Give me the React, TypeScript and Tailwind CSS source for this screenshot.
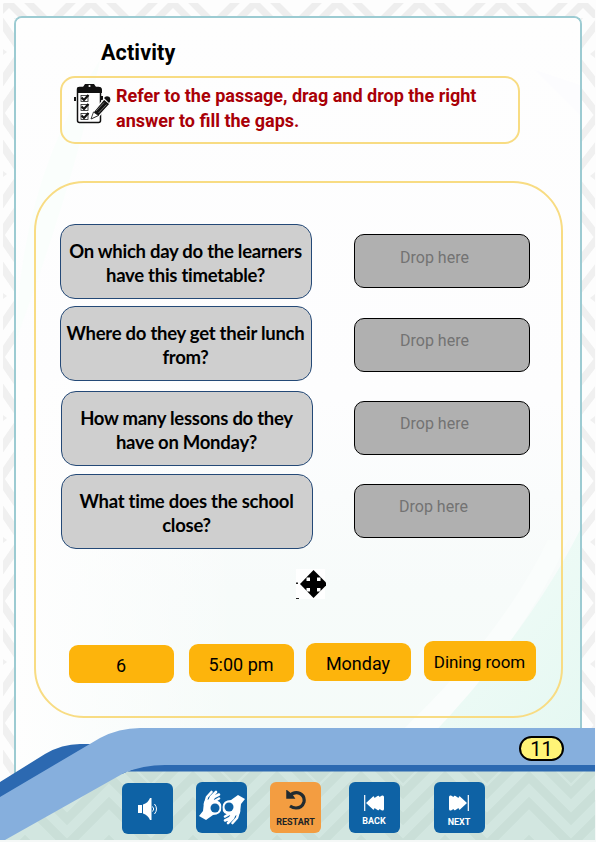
import type { ReactNode } from "react";

const questions = [
  { lines: ["On which day do the learners", "have this timetable?"], box: "mt-0" },
  { lines: ["Where do they get their lunch", "from?"], box: "mt-[7px]" },
  { lines: ["How many lessons do they", "have on Monday?"], box: "mt-[10px] ml-px" },
  { lines: ["What time does the school", "close?"], box: "mt-2 ml-px" },
];

const drops = ["pl-[45px] pt-[13px]", "pl-[45px] pt-3 mt-[30px]", "pl-[45px] pt-3 mt-[29px]", "pl-[44px] pt-3 mt-[29px]"];

function Backdrop() {
  return (
    <svg className="absolute inset-0" width="596" height="842" viewBox="0 0 596 842">
      <defs>
        <pattern id="weave" x="50" y="-4" width="82" height="61" patternUnits="userSpaceOnUse">
          <g fill="none" stroke="#eeeeee" strokeWidth="7">
            <path d="M-10 38 41 -13 92 38" />
            <path d="M-10 58 41 7 92 58" />
            <path d="M-10 78 41 27 92 78" />
          </g>
        </pattern>
        <pattern id="sideWeave" x="3" y="-9" width="12" height="122" patternUnits="userSpaceOnUse">
          <path d="M-3 0 15 26M-3 29 15 55M-3 122 15 96M-3 93 15 67" fill="none" stroke="#f0f0f0" strokeWidth="8" />
          <path d="M0 58 4 61 0 64Z" fill="#f0f0f0" />
        </pattern>
        <pattern id="rightWeave" x="581" y="-7" width="14" height="122" patternUnits="userSpaceOnUse">
          <path d="M17 0 -3 26M17 29 -3 55M17 122 -3 96M17 93 -3 67" fill="none" stroke="#f0f0f0" strokeWidth="7" />
          <path d="M14 57 9 61 14 65Z" fill="#f0f0f0" />
        </pattern>
      </defs>
      <path d="M0 0H596V842H0Z" fill="#fdfdfd" />
      <path d="M3 3H595V18H3Z" fill="url(#weave)" />
      <path d="M3 18H15V800H3Z" fill="url(#sideWeave)" />
      <path d="M581 18H595V740H581Z" fill="url(#rightWeave)" />
    </svg>
  );
}

function PanelTint() {
  return (
    <svg className="absolute inset-0" width="564" height="764" viewBox="16 18 564 764">
      <defs>
        <linearGradient id="wash" x1="0" y1="0" x2="0" y2="1">
          <stop offset="0" stopColor="#fefefe" />
          <stop offset=".5" stopColor="#fdfdfe" />
          <stop offset=".75" stopColor="#f7fbfa" />
          <stop offset="1" stopColor="#f4fbf8" />
        </linearGradient>
        <linearGradient id="mint" x1="1" y1="1" x2=".2" y2="0">
          <stop offset="0" stopColor="#e5f8f2" />
          <stop offset="1" stopColor="#f2fcf8" />
        </linearGradient>
        <linearGradient id="edgeFade" x1="0" y1="0" x2="1" y2="0">
          <stop offset="0" stopColor="#fefefe" />
          <stop offset="1" stopColor="#fefefe" stopOpacity="0" />
        </linearGradient>
      </defs>
      <path d="M16 18H580V782H16Z" fill="url(#wash)" />
      <path d="M16 380H240V782H16Z" fill="url(#edgeFade)" />
      <path d="M16 340Q20 180 100 60Q75 180 16 340Z" fill="#fafefc" />
      <path d="M580 530Q530 630 425 742H580Z" fill="url(#mint)" />
      <path d="M548 540Q500 640 390 742H425Q525 640 568 540Z" fill="#fafdfc" />
      <path d="M535 70 580 85V115Z" fill="#fcfcfe" />
    </svg>
  );
}

function ChecklistIcon() {
  return (
    <svg className="mt-[5px] shrink-0" width="37" height="42" viewBox="0 0 37 42">
      <rect x="3.500" y="4.500" width="23" height="35" rx="2" fill="#fff" stroke="#111" strokeWidth="1.500" />
      <path d="M3 10V6Q3 4 5 4H9L11 1H20L22 4H25Q28 4 28 7V10Z" fill="#111" />
      <circle cx="15.500" cy="3" r="1.100" fill="#fff" />
      <path d="M1 14V18M28 13V17" stroke="#111" strokeWidth="2" />
      <g fill="#fff" stroke="#222" strokeWidth=".8">
        <rect x="7" y="12.500" width="7" height="6" />
        <rect x="7" y="21.500" width="7" height="6" />
        <rect x="7" y="30.500" width="7" height="6" />
      </g>
      <path d="M7.500 14.500 10 17 14.500 12M7.500 23.500 10 26 14.500 21M7.500 32.500 10 35 14.500 30" fill="none" stroke="#111" strokeWidth="2.200" />
      <path d="M17 37 20 28 30 16 36 21 25 33Z" fill="#111" stroke="#fff" strokeWidth="1.200" />
      <path d="M17 36 19.500 29 24.500 32.500Z" fill="#fff" stroke="#111" strokeWidth=".8" />
      <path d="M22 28 30 19.500M24.500 30 32.500 21.500" stroke="#999" strokeWidth=".7" />
      <path d="M30 15Q32 12 35.500 14Q37.500 17 35 20Z" fill="#111" />
    </svg>
  );
}

function MoveCursor() {
  return (
    <svg className="mt-5 ml-[260px]" width="30" height="30" viewBox="0 0 30 30">
      <path d="M0 0H29V30H0Z" fill="#fff" />
      <path d="M17.500 1 30 13.500V16.500L17.500 29 4 15Z" fill="#000" />
      <path d="M10.500 8.500H14V12H10.500ZM21 8.500H24.500V12H21ZM10.500 19H14V22.500H10.500ZM21 19H24.500V22.500H21Z" fill="#fff" />
      <path d="M0 13.500H2V15H0ZM0 29H3V30H0Z" fill="#222" />
    </svg>
  );
}

function FooterArt() {
  return (
    <svg className="absolute inset-0" width="596" height="116" viewBox="0 726 596 116">
      <defs>
        <pattern id="floor" x="25" y="756" width="84" height="90" patternUnits="userSpaceOnUse">
          <g fill="none" stroke="#cadfd8" strokeWidth="9">
            <path d="M-5 -10 42 37 89 -10M-5 16 42 63 89 16M-5 42 42 89 89 42M-5 80 42 127 89 80" />
            <path d="M42 -1 53 10 42 21 31 10Z" fill="#cadfd8" />
          </g>
        </pattern>
      </defs>
      <path d="M0 842V800H596V842Z" fill="#f5f8f7" />
      <path d="M0 840 100 765H595V840Z" fill="#d2e6e0" />
      <path d="M0 840 100 765H595V840Z" fill="url(#floor)" />
      <path d="M0 782 45 754Q62 744 80 744H110L0 814ZM122 774Q140 765 155 764H595V771.500H122Z" fill="#2c69b1" />
      <path d="M0 797 100 738Q119 728 140 728H595V765H165Q143 765 124 773L5 840H0Z" fill="#86afdd" />
    </svg>
  );
}

function SpeakerIcon() {
  return (
    <svg width="22" height="24" viewBox="0 0 22 24">
      <path d="M1 8H5V16H1ZM6 7.500Q11 6 13 1H14.500V23H13Q11 18 6 16.500Z" fill="#fff" />
      <path d="M15.500 9.500Q18 12 15.500 14.500M17.500 7Q21.500 12 17.500 17" fill="none" stroke="#fff" strokeWidth="1" />
    </svg>
  );
}

function Hand() {
  return (
    <>
      <path d="M5 12Q8 8 14 10Q23 10 22.500 18Q22 25 14 25L7 30 0 26 4 21Z" fill="#fff" />
      <path d="M6 14 8 7 12.500 2M10 12 12 7 17 2M12 12 15 7 20 4.500M14 12 20 8.500" fill="none" stroke="#fff" strokeWidth="2.600" strokeLinecap="round" strokeLinejoin="round" />
      <circle cx="16" cy="18" r="4.500" fill="#0e62a5" />
    </>
  );
}

function SignIcon() {
  return (
    <svg width="46" height="36" viewBox="0 0 46 36">
      <Hand />
      <g transform="rotate(180 23 17.500)">
        <Hand />
      </g>
      <path d="M22.700 10V27" stroke="#0e62a5" strokeWidth=".8" />
    </svg>
  );
}

function SkipIcon({ flip = false }: { flip?: boolean }) {
  return (
    <svg className={flip ? "-scale-x-100" : ""} width="20" height="18" viewBox="0 0 20 18">
      <path d="M.7 1V17" stroke="#fff" strokeWidth="1.200" />
      <path d="M2 9 9 2.500Q10 1.500 10.500 4L13.500 2Q15 1 15.500 3L18 1.500Q20 1 20 3V15Q20 17 18 16.500L15.500 15Q15 17 13.500 16L10.500 14Q10 16.500 9 15.500Z" fill="#fff" />
    </svg>
  );
}

function NavButton({ className, label, children }: { className: string; label?: string; children: ReactNode }) {
  return (
    <button className={`flex h-[51px] w-[51px] shrink-0 flex-col items-center rounded-[6px] ${className}`}>
      {children}
      {label && <span className="text-[9px] leading-[12px] font-bold">{label}</span>}
    </button>
  );
}

export default function App() {
  return (
    <main className="relative flex h-[842px] w-[596px] flex-col overflow-hidden bg-white font-['Roboto',sans-serif] text-black">
      <Backdrop />
      <section className="relative mt-4 -mb-[52px] ml-[14px] h-[762px] w-[568px] shrink-0 overflow-hidden rounded-t-[8px] border-2 border-b-0 border-[#9ccbd2] bg-[#fdfefe]">
        <PanelTint />
        <div className="relative flex flex-col">
          <h1 className="mt-[21px] ml-[85px] text-[21.500px] leading-[27px] font-bold tracking-[0.15px]">Activity</h1>
          <div className="mt-[10px] ml-11 flex h-[68px] w-[460px] rounded-[15px] border-2 border-[#f8dc83] pl-3">
            <ChecklistIcon />
            <p className="mt-[5px] ml-[5px] text-[18px] leading-[25px] font-bold whitespace-nowrap text-[#a90007]">
              Refer to the passage, drag and drop the right<br />answer to fill the gaps.
            </p>
          </div>
          <div className="mt-[37px] ml-[18px] flex h-[537px] w-[529px] flex-col rounded-[50px] border-2 border-[#f8dc83]">
            <div className="flex pt-[41px] pl-6">
              <div className="w-[294px]">
                {questions.map((q) => (
                  <div key={q.lines[0]} className={`flex h-[75px] w-[252px] items-center justify-center rounded-[15px] border border-[#244977] bg-[#cfcfcf] pt-[3px] pr-px text-center font-['Lato',sans-serif] text-[18.500px] leading-6 font-bold tracking-[-0.26px] whitespace-nowrap ${q.box}`}>
                    <p>{q.lines[0]}<br />{q.lines[1]}</p>
                  </div>
                ))}
              </div>
              <div className="pt-[10px]">
                {drops.map((d, i) => (
                  <div key={i} className={`h-[54px] w-[176px] rounded-[10px] border border-black bg-[#b0b0b0] text-[16px] leading-5 text-[#737373] ${d}`}>Drop here</div>
                ))}
              </div>
            </div>
            <MoveCursor />
            <div className="mt-[42px] ml-[33px] flex items-start whitespace-nowrap text-[18px]">
              <div className="mt-1 flex h-[38px] w-[105px] items-center justify-center rounded-[9px] bg-[#fdb40c] pt-[2px] pr-px">6</div>
              <div className="mt-[3px] ml-[15px] flex h-[38px] w-[105px] items-center justify-center rounded-[9px] bg-[#fdb40c] pt-[3px] pr-px">5:00 pm</div>
              <div className="mt-[2px] ml-3 flex h-[38px] w-[105px] items-center justify-center rounded-[9px] bg-[#fdb40c] pt-[3px] pr-px">Monday</div>
              <div className="ml-[13px] flex h-10 w-[112px] items-center justify-center rounded-[9px] bg-[#fdb40c] pt-1 pr-px text-[17px] tracking-[-0.05px]">Dining room</div>
            </div>
          </div>
        </div>
      </section>
      <footer className="relative h-[116px] shrink-0">
        <FooterArt />
        <div className="relative flex flex-col">
          <div className="mt-[10px] ml-[519px] flex h-[25px] w-[45px] items-center justify-center rounded-full border-2 border-black bg-[#fff477] text-[20px] leading-none">11</div>
          <nav className="mt-[21px] ml-[122px] flex items-start">
            <NavButton className="mt-px bg-[#0e62a5] pt-[14px]"><SpeakerIcon /></NavButton>
            <NavButton className="ml-[23px] bg-[#0e62a5] pt-2"><SignIcon /></NavButton>
            <NavButton className="ml-[23px] bg-[#f39d41] pt-2 text-[#202326]" label="RESTART">
              <svg className="mb-[6px]" width="22" height="20" viewBox="0 0 22 20">
                <path d="M4 6.500Q9 1 15 3.500Q20 6 19 12Q17 18 11 18Q8 18 5 16" fill="none" stroke="#222b30" strokeWidth="3.200" />
                <path d="M2 1V8H9L7 5Z" fill="#222b30" stroke="#222b30" strokeWidth="1.500" />
              </svg>
            </NavButton>
            <NavButton className="ml-[28px] bg-[#0e62a5] pt-[12px] pr-px text-white" label="BACK"><div className="mb-[3px]"><SkipIcon /></div></NavButton>
            <NavButton className="ml-[34px] bg-[#0e62a5] pt-[12px] pr-px text-white" label="NEXT"><div className="mb-1"><SkipIcon flip /></div></NavButton>
          </nav>
        </div>
      </footer>
    </main>
  );
}
